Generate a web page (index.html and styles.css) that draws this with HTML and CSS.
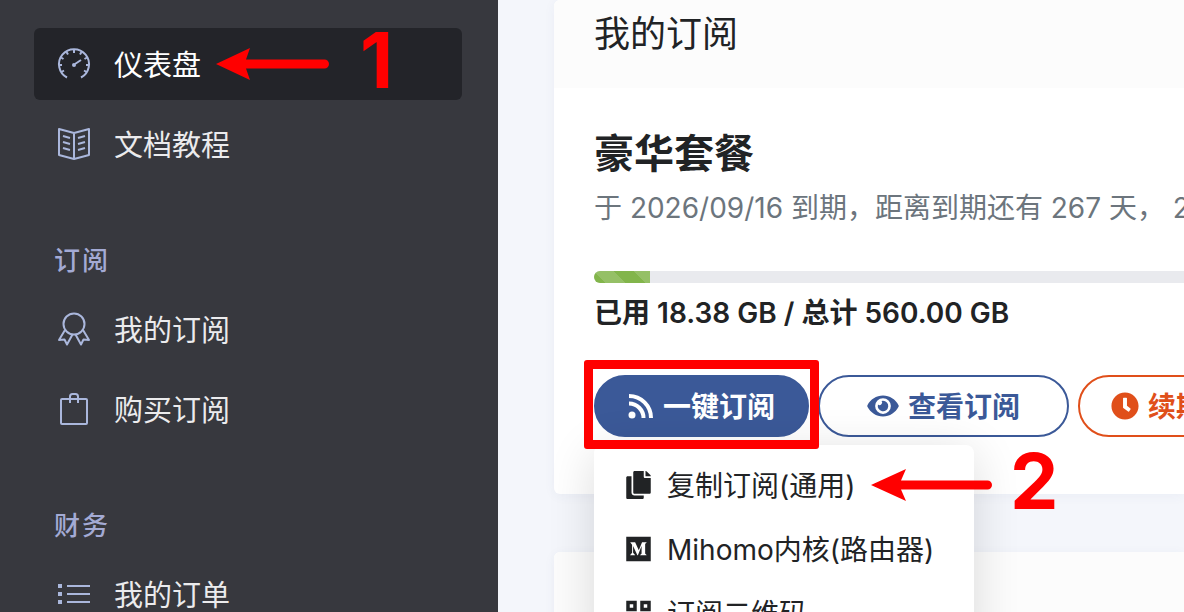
FILE: index.html
```html
<!DOCTYPE html>
<html lang="zh-CN">
<head>
  <meta charset="UTF-8" />
  <title>仪表盘</title>
  <link rel="stylesheet" href="styles.css">
</head>
<body>

  <aside class="sidebar">
    <nav>
      <a class="nav-item active" href="#">
        <svg class="nav-icon" viewBox="0 0 32 32">
          <path d="M9 29.5A15 15 0 1 1 23 29.5" />
          <path d="M16 2v3M8.500 4l1.500 2.500M23.500 4L22 6.500M3 9.500L5.500 11M29 9.500L26.500 11M1.500 17H4M30.500 17H28M3.500 24L6 22.500M28.500 24L26 22.500M17 16l6-4" />
          <circle class="solid" cx="16" cy="17" r="2" />
        </svg>
        <span>仪表盘</span>
        <svg class="arrow arrow-one" viewBox="0 0 113 32">
          <path d="M0 16L34 0L30 11.500H108.500A4.500 4.500 0 0 1 108.500 20.500H30L34 32Z" />
        </svg>
        <span class="step step-one">1</span>
      </a>
      <a class="nav-item" href="#">
        <svg class="nav-icon" viewBox="0 0 32 32">
          <path d="M16 5L31 1V27L16 31L1 27V1ZM16 5V31M5 8l7 2M5 14l7 2M5 20l7 2M27 8l-7 2M27 14l-7 2M27 20l-7 2" />
        </svg>
        <span>文档教程</span>
      </a>
      <h2 class="nav-heading">订阅</h2>
      <a class="nav-item" href="#">
        <svg class="nav-icon" viewBox="0 0 32 32">
          <circle cx="16" cy="11" r="10.500" />
          <path d="M7 17L1 27l5.500-.5L9 31.500L14.500 21.500M25 17l6 10-5.500-.5L23 31.500L17.500 21.500" />
        </svg>
        <span>我的订阅</span>
      </a>
      <a class="nav-item" href="#">
        <svg class="nav-icon" viewBox="0 0 32 32">
          <path d="M4 6H28Q29 6 29 7V30Q29 31 28 31H4Q3 31 3 30V7Q3 6 4 6ZM12 10V3.500Q12 1 14.500 1H17.500Q20 1 20 3.500V10" />
        </svg>
        <span>购买订阅</span>
      </a>
      <h2 class="nav-heading">财务</h2>
      <a class="nav-item" href="#">
        <svg class="nav-icon" viewBox="0 0 32 32">
          <path d="M9 8H32M9 16H32M9 24H32" />
          <path class="solid" d="M0 6h4v4H0zM0 14h4v4H0zM0 22h4v4H0z" />
        </svg>
        <span>我的订单</span>
      </a>
    </nav>
  </aside>

  <main class="content">
    <section class="card">
      <header class="card-header">
        <h3>我的订阅</h3>
      </header>
      <div class="card-body">
        <h1 class="plan-name">豪华套餐</h1>
        <p class="plan-info">于 2026/09/16 到期，距离到期还有 267 天， 2</p>
        <div class="progress">
          <div class="progress-bar"></div>
        </div>
        <p class="usage">已用 18.38 GB / 总计 560.00 GB</p>

        <div class="actions">
          <div class="dropdown">
            <button class="btn btn-primary" type="button">
              <svg class="icon-rss" viewBox="0 0 26 26">
                <circle cx="4" cy="22" r="3.500" />
                <path d="M1 10.500A14.500 14.500 0 0 1 15.500 25M1 3A22 22 0 0 1 23 25" />
              </svg>
              <span>一键订阅</span>
            </button>
            <div class="highlight"></div>
            <div class="menu">
              <a class="menu-item" href="#">
                <svg viewBox="0 0 448 512"><path d="M320 448v40c0 13.255-10.745 24-24 24H24c-13.255 0-24-10.745-24-24V120c0-13.255 10.745-24 24-24h72v296c0 30.879 25.121 56 56 56h168zm0-344V0H152c-13.255 0-24 10.745-24 24v368c0 13.255 10.745 24 24 24h272c13.255 0 24-10.745 24-24V128H344c-13.200 0-24-10.800-24-24zm120.971-31.029L375.029 7.029A24 24 0 0 0 358.059 0H352v96h96v-6.059a24 24 0 0 0-7.029-16.970z" /></svg>
                <span>复制订阅(通用)</span>
                <svg class="arrow arrow-two" viewBox="0 0 121 32">
                  <path d="M0 16L35 0L30 11.500H116.500A4.500 4.500 0 0 1 116.500 20.500H30L35 32Z" />
                </svg>
                <span class="step step-two">2</span>
              </a>
              <a class="menu-item" href="#">
                <svg viewBox="0 0 448 512"><path d="M0 32v448h448V32H0zm372.200 106.100l-24 23c-2.100 1.600-3.100 4.200-2.700 6.700v169.300c-.4 2.600.6 5.200 2.700 6.700l23.500 23v5.100h-118V367l24.300-23.600c2.400-2.400 2.400-3.100 2.400-6.700V199.800l-67.600 171.600h-9.100L125 199.800v115c-.7 4.800 1 9.700 4.400 13.200l31.600 38.300v5.100H71.200v-5.100l31.600-38.300c3.400-3.500 4.900-8.400 4.100-13.200v-133c.4-3.700-1-7.300-3.800-9.800L75 138.100V133h87.300l67.400 148L289 133.100h83.200v5z" /></svg>
                <span>Mihomo内核(路由器)</span>
              </a>
              <a class="menu-item" href="#">
                <svg viewBox="0 0 448 512"><path d="M0 224h192V32H0v192zM64 96h64v64H64V96zm192-64v192h192V32H256zm128 128h-64V96h64v64zM0 480h192V288H0v192zm64-128h64v64H64v-64zm192-64h64v64h-64zm128 0h64v64h-64zm-64 96h64v96h-64z" /></svg>
                <span>订阅二维码</span>
              </a>
            </div>
          </div>
          <button class="btn btn-view" type="button">
            <svg class="icon-eye" viewBox="0 0 576 512"><path d="M572.520 241.400C518.290 135.590 410.930 64 288 64S57.680 135.640 3.480 241.410a32.350 32.350 0 0 0 0 29.190C57.710 376.410 165.070 448 288 448s230.320-71.640 284.520-177.410a32.350 32.350 0 0 0 0-29.190zM288 400a144 144 0 1 1 144-144 143.930 143.930 0 0 1-144 144zm0-240a95.310 95.310 0 0 0-25.310 3.790 47.850 47.850 0 0 1-66.900 66.900A95.780 95.780 0 1 0 288 160z" /></svg>
            <span>查看订阅</span>
          </button>
          <button class="btn btn-renew" type="button">
            <svg class="icon-clock" viewBox="0 0 512 512"><path d="M256 8C119 8 8 119 8 256s111 248 248 248 248-111 248-248S393 8 256 8zm57.100 350.100L224.900 294c-3.100-2.300-4.900-5.900-4.900-9.700V116c0-6.600 5.400-12 12-12h48c6.600 0 12 5.400 12 12v137.700l63.500 46.200c5.400 3.900 6.500 11.400 2.600 16.800l-28.200 38.800c-3.900 5.300-11.400 6.500-16.800 2.600z" /></svg>
            <span>续期</span>
          </button>
        </div>
      </div>
    </section>

    <section class="card">
      <header class="card-header"></header>
    </section>
  </main>

</body>
</html>
```

FILE: styles.css
```css
* {
  box-sizing: border-box;
}

body {
  display: flex;
  margin: 0;
  height: 100vh;
  overflow: hidden;
  background: #f4f6fb;
  color: #212325;
  font-family: Inter, "Noto Sans CJK SC", sans-serif;
  font-size: 28px;
}

h1, h2, h3, p {
  margin: 0;
}

a {
  color: inherit;
  text-decoration: none;
}

/* sidebar */
.sidebar {
  flex: 0 0 498px;
  padding: 28px 36px 0 34px;
  background: #37383e;
}

.nav-item {
  position: relative;
  display: flex;
  align-items: center;
  gap: 24px;
  height: 72px;
  margin-bottom: 8px;
  padding: 0 24px;
  border-radius: 6px;
  color: #ebebed;
  font-size: 29px;
}

.nav-item span,
.menu-item span,
.btn span {
  padding-bottom: 2px;
}

.nav-item.active {
  background: #232429;
  color: #fff;
}

.nav-icon {
  width: 32px;
  height: 32px;
  overflow: visible;
  fill: none;
  stroke: #aab7dc;
  stroke-width: 2;
  stroke-linejoin: round;
}

.nav-icon .solid {
  fill: #aab7dc;
  stroke: none;
}

.nav-heading {
  padding: 57px 20px 16px;
  color: #a3aad4;
  font-size: 26px;
  font-weight: 500;
  line-height: 32px;
  letter-spacing: 2px;
}

/* content */
.content {
  flex: 1;
  min-width: 0;
  padding-left: 56px;
}

.card {
  height: 494px;
  margin-bottom: 58px;
  border-radius: 6px 0 0 6px;
  background: #fff;
  box-shadow: 0 2px 12px rgba(60, 80, 140, 0.05);
}

.card-header {
  height: 88px;
  padding: 10px 40px;
  border-radius: 6px 0 0 0;
  background: #fcfcfc;
}

.card-header h3 {
  font-size: 36px;
  font-weight: 400;
  line-height: 48px;
}

.card-body {
  padding: 40px 0 0 40px;
  white-space: nowrap;
}

.plan-name {
  font-size: 40px;
  font-weight: 700;
  line-height: 52px;
}

.plan-info {
  margin-top: 8px;
  color: #6c757d;
  line-height: 40px;
}

.progress {
  height: 12px;
  margin-top: 43px;
  border-radius: 6px 0 0 6px;
  background: #e9eaee;
  overflow: hidden;
}

.progress-bar {
  width: 56px;
  height: 100%;
  background: #82b54b linear-gradient(45deg, rgba(255, 255, 255, .15) 25%, transparent 25%, transparent 50%, rgba(255, 255, 255, .15) 50%, rgba(255, 255, 255, .15) 75%, transparent 75%) 0 0 / 40px 40px;
}

.usage {
  margin-top: 10px;
  font-weight: 600;
  line-height: 40px;
}

.actions {
  display: flex;
  gap: 9px;
  margin-top: 42px;
}

.dropdown {
  position: relative;
}

.btn {
  display: flex;
  flex-shrink: 0;
  align-items: center;
  gap: 9px;
  height: 62px;
  padding: 0 31px;
  border: 2px solid #3b5998;
  border-radius: 31px;
  background: #fff;
  color: #3b5998;
  font-family: inherit;
  font-size: 28px;
  font-weight: 600;
  cursor: pointer;
}

.btn svg {
  fill: currentColor;
}

.btn-primary {
  padding: 0 32px;
  background: #3b5998;
  color: #fff;
}

.btn-view {
  padding: 0 47px;
}

.btn-renew {
  border-color: #e04f1a;
  color: #e04f1a;
}

.icon-rss {
  width: 26px;
  height: 26px;
}

.icon-rss path {
  fill: none;
  stroke: currentColor;
  stroke-width: 4;
}

.icon-eye {
  width: 32px;
  height: 28px;
}

.icon-clock {
  width: 28px;
  height: 28px;
}

.menu {
  position: absolute;
  z-index: 1;
  top: 70px;
  left: 0;
  width: 380px;
  padding: 8px 0;
  border-radius: 8px;
  background: #fff;
  box-shadow: 0 8px 48px rgba(0, 0, 0, 0.14);
}

.menu-item {
  position: relative;
  display: flex;
  align-items: center;
  gap: 16px;
  height: 64px;
  padding: 0 32px;
}

.menu-item > svg:first-child {
  width: 25px;
  height: 28px;
  fill: #212325;
}

/* guide marks */
.highlight {
  position: absolute;
  z-index: 2;
  inset: -15px -10px -12px;
  border: 9px solid #f00;
  border-radius: 3px;
  pointer-events: none;
}

.arrow {
  position: absolute;
  height: 32px;
  fill: #f00;
}

.arrow-one {
  left: 182px;
  width: 113px;
}

.arrow-two {
  left: 277px;
  width: 121px;
}

.nav-item .step,
.menu-item .step {
  position: absolute;
  padding-bottom: 8px;
  color: #f00;
  font-size: 77px;
  font-weight: 700;
  line-height: 64px;
}

.step-one {
  left: 326px;
}

.step-two {
  left: 416px;
}
```
